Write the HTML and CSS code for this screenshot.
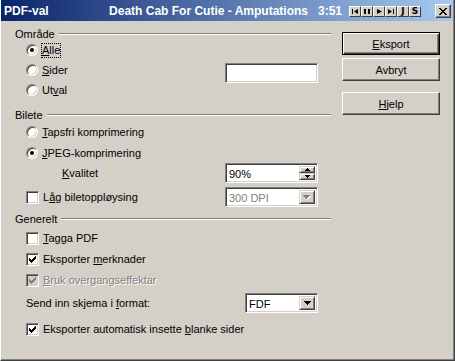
FILE: index.html
```html
<html>

<head>
  <meta charset="utf-8">
  <link rel="stylesheet" href="styles.css">
</head>

<body>
  <div class="window">
    <div class="titlebar">
      <span class="title">PDF-val</span>
      <span class="track">Death Cab For Cutie - Amputations</span>
      <span class="time">3:51</span>
      <div class="media">
        <span class="media-btn"><svg width="7" height="5" viewBox="0 0 7 5"><path d="M0 0h1v5H0zM6 0v5L2 2.5z"/></svg></span>
        <span class="media-btn"><svg width="6" height="5" viewBox="0 0 6 5"><path d="M0 0h2v5H0zM4 0h2v5H4z"/></svg></span>
        <span class="media-btn"><svg width="5" height="5" viewBox="0 0 5 5"><path d="M0 0l5 2.5L0 5z"/></svg></span>
        <span class="media-btn"><svg width="7" height="5" viewBox="0 0 7 5"><path d="M0 0l4 2.5L0 5zM5 0h1v5H5z"/></svg></span>
        <span class="media-btn letter">J</span>
        <span class="media-btn letter">S</span>
      </div>
      <span class="close">
        <svg width="8" height="7" viewBox="0 0 8 7" shape-rendering="crispEdges"><path d="M0 0h2v1h-2zM6 0h2v1h-2zM1 1h2v1h-2zM5 1h2v1h-2zM2 2h4v1h-4zM3 3h2v1h-2zM2 4h4v1h-4zM1 5h2v1h-2zM5 5h2v1h-2zM0 6h2v1h-2zM6 6h2v1h-2z"/></svg>
      </span>
    </div>

    <div class="content">
      <div class="main">
        <div class="group-head"><span>Område</span></div>
        <div class="group">
          <div class="row">
            <span class="radio checked"></span>
            <span class="label focus"><u>A</u>lle</span>
          </div>
          <div class="row">
            <span class="radio"></span>
            <span class="label"><u>S</u>ider</span>
            <span class="field pages"></span>
          </div>
          <div class="row">
            <span class="radio"></span>
            <span class="label">Ut<u>v</u>al</span>
          </div>
        </div>

        <div class="group-head section"><span>Bilete</span></div>
        <div class="group">
          <div class="row step">
            <span class="radio"></span>
            <span class="label"><u>T</u>apsfri komprimering</span>
          </div>
          <div class="row step">
            <span class="radio checked"></span>
            <span class="label"><u>J</u>PEG-komprimering</span>
          </div>
          <div class="row">
            <span class="label sub"><u>K</u>valitet</span>
            <span class="field spin">
              <span class="value">90%</span>
              <span class="spin-btns">
                <span class="spin-btn"><svg width="5" height="3" viewBox="0 0 5 3" shape-rendering="crispEdges"><path d="M2 0h1v1h1v1h1v1H0V2h1V1h1z"/></svg></span>
                <span class="spin-btn"><svg width="5" height="3" viewBox="0 0 5 3" shape-rendering="crispEdges"><path d="M0 0h5v1H4v1H3v1H2V2H1V1H0z"/></svg></span>
              </span>
            </span>
          </div>
          <div class="row step-l">
            <span class="check"></span>
            <span class="label">L<u>å</u>g biletoppløysing</span>
            <span class="field combo disabled">
              <span class="value">300 DPI</span>
              <span class="drop"><svg width="8" height="5" viewBox="0 0 8 5" shape-rendering="crispEdges"><path class="shade" d="M1 1h7v1h-1v1h-1v1h-1v1h-1v-1h-1v-1h-1v-1h-1z"/><path d="M0 0h7v1h-1v1h-1v1h-1v1h-1v-1h-1v-1h-1v-1h-1z"/></svg></span>
            </span>
          </div>
        </div>

        <div class="group-head section-s"><span>Generelt</span></div>
        <div class="group">
          <div class="row step-m">
            <span class="check"></span>
            <span class="label"><u>T</u>agga PDF</span>
          </div>
          <div class="row step">
            <span class="check checked"><svg width="7" height="7" viewBox="0 0 7 7" shape-rendering="crispEdges"><path d="M0 2v3h1v1h1v1h1v-1h1v-1h1v-1h1v-1h1v-3h-1v1h-1v1h-1v1h-1v1h-1v-1h-1v-1h-1z"/></svg></span>
            <span class="label">Eksporter <u>m</u>erknader</span>
          </div>
          <div class="row step">
            <span class="check checked disabled"><svg width="7" height="7" viewBox="0 0 7 7" shape-rendering="crispEdges"><path d="M0 2v3h1v1h1v1h1v-1h1v-1h1v-1h1v-1h1v-3h-1v1h-1v1h-1v1h-1v1h-1v-1h-1v-1h-1z"/></svg></span>
            <span class="label off"><u>B</u>ruk overgangseffektar</span>
          </div>
          <div class="row step-m">
            <span class="label">Send inn skjema i <u>f</u>ormat:</span>
            <span class="field combo short">
              <span class="value">FDF</span>
              <span class="drop"><svg width="7" height="4" viewBox="0 0 7 4" shape-rendering="crispEdges"><path d="M0 0h7v1h-1v1h-1v1h-1v1h-1v-1h-1v-1h-1v-1h-1z"/></svg></span>
            </span>
          </div>
          <div class="row step-xl">
            <span class="check checked"><svg width="7" height="7" viewBox="0 0 7 7" shape-rendering="crispEdges"><path d="M0 2v3h1v1h1v1h1v-1h1v-1h1v-1h1v-1h1v-3h-1v1h-1v1h-1v1h-1v1h-1v-1h-1v-1h-1z"/></svg></span>
            <span class="label">Eksporter automatisk insette <u>b</u>lanke sider</span>
          </div>
        </div>
      </div>

      <div class="actions">
        <button class="btn default"><u>E</u>ksport</button>
        <button class="btn">Avbryt</button>
        <button class="btn help"><u>H</u>jelp</button>
      </div>
    </div>
  </div>
</body>

</html>
```

FILE: styles.css
```css
* {
  box-sizing: border-box;
}

body {
  margin: 0;
  font: 11px "Liberation Sans", Arial, sans-serif;
  color: #000;
}

.window {
  width: 455px;
  height: 361px;
  background: #d4d0c8;
  border-left: 1px solid #fff;
  border-right: 1px solid #404040;
  border-bottom: 1px solid #404040;
  box-shadow: inset -1px -1px #808080;
  padding: 0 1px 1px 0;
}

/* title bar */
.titlebar {
  height: 21px;
  display: flex;
  align-items: center;
  padding: 1px 2px 0 3px;
  background: linear-gradient(to right, #0a246a, #a6caf0);
  color: #fff;
  font: bold 12px "Liberation Sans", Arial, sans-serif;
  white-space: nowrap;
}

.track {
  margin-left: auto;
}

.time {
  margin-left: 10px;
}

.media {
  display: flex;
  margin-left: 7px;
}

.media-btn {
  width: 12px;
  height: 11px;
  display: flex;
  align-items: center;
  justify-content: center;
  background: #d4d0c8;
  border: 1px solid;
  border-color: #fff #404040 #404040 #fff;
  color: #000;
}

.media-btn.letter {
  font: bold 9px "DejaVu Sans", sans-serif;
  line-height: 9px;
}

.close {
  width: 16px;
  height: 14px;
  margin-left: 14px;
  display: flex;
  align-items: center;
  justify-content: center;
  background: #d4d0c8;
  border: 1px solid;
  border-color: #fff #404040 #404040 #fff;
  box-shadow: inset -1px -1px #808080;
}

/* dialog body */
.content {
  display: flex;
}

.main {
  width: 330px;
  padding: 7px 0 0 14px;
}

.group-head {
  height: 12px;
  display: flex;
  align-items: center;
  gap: 4px;
}

.group-head::after {
  content: '';
  flex: 1;
  border-top: 1px solid #808080;
  border-bottom: 1px solid #fff;
  margin-top: -1px;
}

.group-head.section {
  margin-top: 9px;
}

.group-head.section-s {
  margin-top: 6px;
}

.group {
  margin-left: 11px;
  padding-right: 13px;
}

.row {
  height: 20px;
  display: flex;
  align-items: center;
  white-space: nowrap;
}

.row.step {
  margin-top: 1px;
}

.row.step-m {
  margin-top: 3px;
}

.row.step-l {
  margin-top: 4px;
}

.row.step-xl {
  margin-top: 6px;
}

.radio + .label,
.check + .label {
  margin-left: 4px;
}

.label.sub {
  margin-left: 36px;
}

.label.focus {
  outline: 1px dotted #000;
  line-height: 13px;
}

.label.off {
  color: #808080;
  text-shadow: 1px 1px #fff;
}

/* radios and checks */
.radio {
  width: 12px;
  height: 12px;
  flex: none;
  border-radius: 50%;
  background: #fff;
  border: 1px solid;
  border-color: #808080 #fff #fff #808080;
  box-shadow: inset 1px 1px #404040, inset -1px -1px #d4d0c8;
  display: flex;
  align-items: center;
  justify-content: center;
}

.radio.checked::after {
  content: '';
  width: 4px;
  height: 4px;
  border-radius: 50%;
  background: #000;
}

.check {
  width: 13px;
  height: 13px;
  flex: none;
  background: #fff;
  border: 1px solid;
  border-color: #808080 #fff #fff #808080;
  box-shadow: inset 1px 1px #404040, inset -1px -1px #d4d0c8;
  display: flex;
  align-items: center;
  justify-content: center;
}

.check svg {
  fill: #000;
}

.check.disabled {
  background: #d4d0c8;
}

.check.disabled svg {
  fill: #808080;
}

/* fields */
.field {
  height: 20px;
  margin-left: auto;
  display: flex;
  align-items: stretch;
  background: #fff;
  border: 1px solid;
  border-color: #808080 #fff #fff #808080;
  box-shadow: inset 1px 1px #404040, inset -1px -1px #d4d0c8;
  padding: 2px;
}

.field.pages {
  width: 93px;
  align-self: flex-start;
  margin-top: 3px;
}

.field.spin,
.field.combo {
  width: 93px;
}

.field.short {
  width: 73px;
}

.value {
  flex: 1;
  padding-left: 1px;
  line-height: 16px;
}

.combo.disabled .value {
  color: #808080;
}

.spin-btns {
  width: 16px;
  display: flex;
  flex-direction: column;
}

.spin-btn,
.drop {
  display: flex;
  align-items: center;
  justify-content: center;
  background: #d4d0c8;
  border: 1px solid;
  border-color: #d4d0c8 #404040 #404040 #d4d0c8;
  box-shadow: inset 1px 1px #fff, inset -1px -1px #808080;
}

.spin-btn {
  flex: 1;
}

.drop {
  width: 16px;
}

.drop .shade {
  fill: #fff;
}

.combo.disabled .drop path:not(.shade) {
  fill: #808080;
}

/* buttons */
.actions {
  width: 98px;
  margin-left: 11px;
  padding-top: 11px;
  display: flex;
  flex-direction: column;
  gap: 3px;
}

.btn {
  height: 23px;
  width: 98px;
  padding: 0;
  font: 11px "Liberation Sans", Arial, sans-serif;
  color: #000;
  background: #d4d0c8;
  border: 1px solid;
  border-color: #fff #404040 #404040 #fff;
  box-shadow: inset -1px -1px #808080, inset 1px 1px #d4d0c8;
}

.btn.default {
  border-color: #000;
  box-shadow: inset 1px 1px #fff, inset -1px -1px #404040, inset -2px -2px #808080;
}

.btn.help {
  margin-top: 8px;
}
```
